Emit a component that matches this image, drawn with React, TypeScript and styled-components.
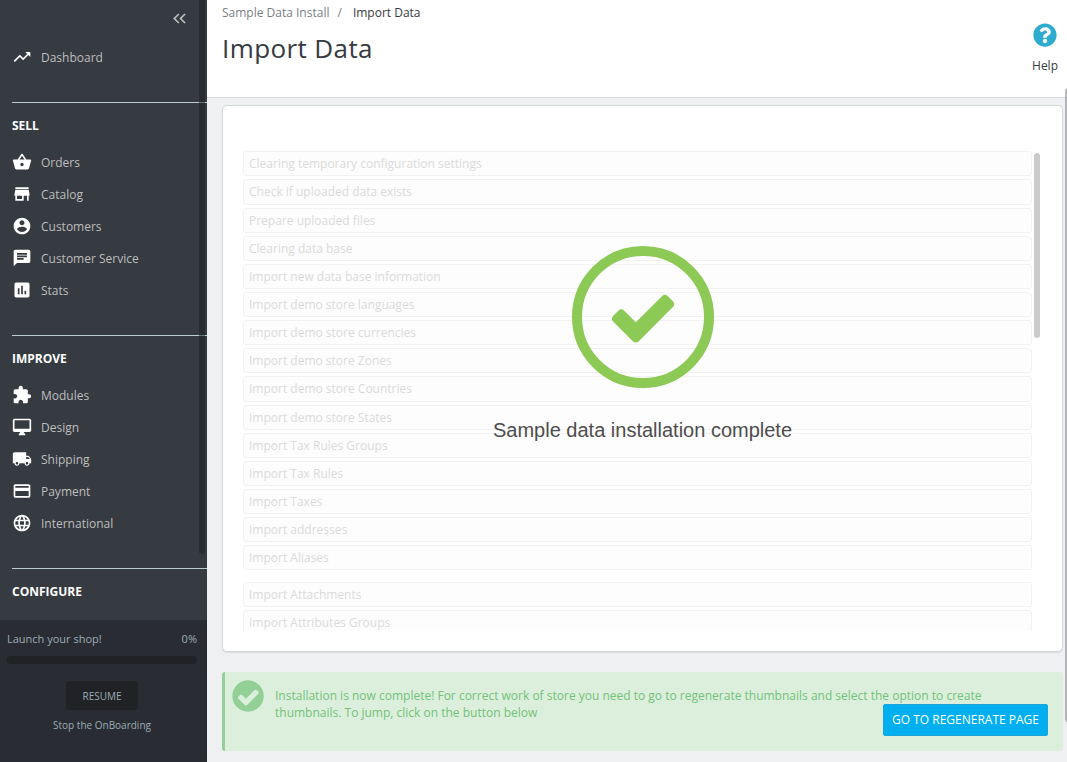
import React from "react";
import styled, { createGlobalStyle } from "styled-components";
import { MdTrendingUp, MdChat, MdAssessment, MdExtension, MdLocalShipping, MdCreditCard, MdLanguage } from "react-icons/md";
import { FaQuestionCircle } from "react-icons/fa";

const GlobalStyle = createGlobalStyle`
  * { box-sizing: border-box; }
  body { margin: 0; font-family: "Open Sans", "Noto Sans", sans-serif; font-size: 12px; background: #eef0f2; overflow: hidden; }
`;

const Page = styled.div`
  position: relative;
  display: flex;
  width: 1067px;
  height: 762px;
  overflow: hidden;
  background: #eef0f2;
`;

const Sidebar = styled.nav`
  position: relative;
  display: flex;
  flex-direction: column;
  flex: none;
  width: 207px;
  height: 762px;
  background: #363a41;
`;

const MenuArea = styled.div`
  height: 620px;
  flex: none;
`;

const Collapse = styled.div`
  display: flex;
  justify-content: flex-end;
  height: 41px;
  padding: 13px 20px 0 0;
`;

const Rail = styled.div`
  position: absolute;
  top: -4px;
  right: 2px;
  width: 6px;
  height: 558px;
  border-radius: 3px;
  background: rgba(30, 30, 38, 0.5);
`;

const Section = styled.section`
  margin-bottom: 29px;
`;

const SectionTitle = styled.h2`
  margin: 0 0 0 12px;
  height: 44px;
  border-top: 1px solid #bbcdd2;
  color: #fff;
  font-size: 12px;
  font-weight: 700;
  line-height: 45px;
`;

const MenuItem = styled.a`
  display: flex;
  align-items: center;
  height: 32px;
  padding-left: 11.6px;
  gap: 9.4px;
  color: #bebebe;
  font-size: 12px;
  svg {
    flex: none;
    width: 20px;
    height: 20px;
    color: #fff;
  }
`;

const Onboarding = styled.div`
  display: flex;
  flex-direction: column;
  flex: 1;
  align-items: center;
  padding: 10px 10px 0 7px;
  background: #2a2c33;
  color: #9badb3;
`;

const LaunchRow = styled.div`
  display: flex;
  align-self: stretch;
  justify-content: space-between;
  font-size: 11px;
  line-height: 18px;
`;

const Track = styled.div`
  align-self: stretch;
  height: 8px;
  margin-top: 8px;
  border-radius: 4px;
  background: #202226;
`;

const ResumeButton = styled.button`
  width: 72px;
  height: 29px;
  margin-top: 17px;
  padding: 0;
  border: 0;
  border-radius: 3px;
  background: #202226;
  color: #9badb3;
  font: 10px "Open Sans", sans-serif;
`;

const StopLink = styled.a`
  margin-top: 7px;
  font-size: 10px;
  line-height: 16px;
`;

const Main = styled.main`
  flex: 1;
  min-width: 0;
`;

const Header = styled.header`
  display: flex;
  justify-content: space-between;
  height: 98px;
  padding: 0 9px 0 15px;
  border-bottom: 1px solid #d8dbdd;
  background: #fff;
`;

const Breadcrumb = styled.div`
  display: flex;
  padding-top: 4px;
  color: #363a41;
  line-height: 18px;
`;

const Crumb = styled.span`
  color: #7c8085;
`;

const Slash = styled.span`
  margin: 0 11px 0 8px;
  color: #7c8085;
`;

const Title = styled.h1`
  margin: 8px 0 0;
  color: #363a41;
  font-size: 26px;
  font-weight: 400;
  letter-spacing: 0.4px;
  line-height: 36px;
`;

const Help = styled.div`
  display: flex;
  flex-direction: column;
  align-items: center;
  padding-top: 23px;
  color: #363a41;
  line-height: 16px;
  svg {
    margin-bottom: 11px;
    color: #2eacce;
  }
`;

const Panel = styled.section`
  position: relative;
  width: 841px;
  height: 547px;
  margin: 7px 0 0 15px;
  padding: 45px 21px 0 20px;
  border: 1px solid #d3d8db;
  border-radius: 5px;
  background: #fff;
  box-shadow: 0 1px 1px rgba(0, 0, 0, 0.08);
`;

const TaskList = styled.div`
  display: flex;
  height: 480px;
  overflow: hidden;
`;

const Tasks = styled.div`
  width: 789px;
  padding-top: 0.3px;
`;

const Task = styled.div<{ $gap?: boolean }>`
  height: 25.155px;
  margin-bottom: ${(p) => (p.$gap ? 11.6 : 3)}px;
  padding-left: 5px;
  border: 1px solid #f2f2f2;
  border-radius: 3px;
  background: #fdfdfd;
  color: #dadada;
  line-height: 23px;
`;

const ListThumb = styled.div`
  width: 6px;
  height: 185px;
  margin: 2px 0 0 2px;
  border-radius: 3px;
  background: #cbcbcb;
`;

const Complete = styled.div`
  position: absolute;
  top: 140px;
  left: 0;
  right: 0;
  display: flex;
  flex-direction: column;
  align-items: center;
  color: #4d4d4d;
  font: 20px/24px "Liberation Sans", Arial, sans-serif;
  svg {
    margin-bottom: 30px;
  }
`;

const Alert = styled.div`
  position: relative;
  display: flex;
  width: 841px;
  height: 79px;
  margin: 20px 0 0 15px;
  padding: 8px 0 0 6.5px;
  border-left: 3px solid #92d097;
  border-radius: 3px;
  background: #dcefdd;
  color: #72c279;
  svg {
    flex: none;
  }
`;

const AlertText = styled.p`
  width: 730px;
  margin: 7px 0 0 11.5px;
  line-height: 17px;
`;

const RegenerateButton = styled.button`
  position: absolute;
  right: 15px;
  bottom: 15px;
  width: 165px;
  height: 32px;
  padding: 0 0 2px;
  border: 1px solid #1ea6dc;
  border-radius: 2px;
  background: #00aff0;
  color: #fff;
  font: 12px "Open Sans", sans-serif;
  white-space: nowrap;
`;

const PageThumb = styled.div`
  position: absolute;
  top: 88px;
  right: -4px;
  width: 6px;
  height: 634px;
  border-radius: 3px;
  background: rgba(120, 120, 124, 0.5);
`;

const glyph = (d: string) => () => (
  <svg viewBox="0 0 24 24" fill="currentColor">
    <path d={d} />
  </svg>
);

const BasketIcon = glyph(
  "M17.21 9l-4.38-6.56a.993.993 0 0 0-.83-.42c-.32 0-.64.14-.83.43L6.79 9H2c-.55 0-1 .45-1 1 0 .09.01.18.04.27l2.54 9.27c.23.84 1 1.46 1.92 1.46h13c.92 0 1.69-.62 1.93-1.46l2.54-9.27L23 10c0-.55-.45-1-1-1h-4.79zM9 9l3-4.4L15 9H9zm3 8c-1.1 0-2-.9-2-2s.9-2 2-2 2 .9 2 2-.9 2-2 2z"
);
const StoreIcon = glyph("M20 4H4v2h16V4zm1 10v-2l-1-5H4l-1 5v2h1v6h10v-6h4v6h2v-6h1zm-9 4H6v-4h6v4z");
const PersonIcon = glyph(
  "M12 2C6.48 2 2 6.48 2 12s4.48 10 10 10 10-4.48 10-10S17.52 2 12 2zm0 3c1.66 0 3 1.34 3 3s-1.34 3-3 3-3-1.34-3-3 1.34-3 3-3zm0 14.2c-2.5 0-4.71-1.28-6-3.22.03-1.99 4-3.08 6-3.08 1.99 0 5.97 1.09 6 3.08-1.29 1.94-3.5 3.22-6 3.22z"
);
const DesktopIcon = glyph(
  "M21 2H3c-1.1 0-2 .9-2 2v12c0 1.1.9 2 2 2h7l-2 3v1h8v-1l-2-3h7c1.1 0 2-.9 2-2V4c0-1.1-.9-2-2-2zm0 12H3V4h18v10z"
);

const sell = [
  { label: "Orders", Icon: BasketIcon },
  { label: "Catalog", Icon: StoreIcon },
  { label: "Customers", Icon: PersonIcon },
  { label: "Customer Service", Icon: MdChat },
  { label: "Stats", Icon: MdAssessment },
];

const improve = [
  { label: "Modules", Icon: MdExtension },
  { label: "Design", Icon: DesktopIcon },
  { label: "Shipping", Icon: MdLocalShipping },
  { label: "Payment", Icon: MdCreditCard },
  { label: "International", Icon: MdLanguage },
];

const tasks = [
  "Clearing temporary configuration settings",
  "Check if uploaded data exists",
  "Prepare uploaded files",
  "Clearing data base",
  "Import new data base information",
  "Import demo store languages",
  "Import demo store currencies",
  "Import demo store Zones",
  "Import demo store Countries",
  "Import demo store States",
  "Import Tax Rules Groups",
  "Import Tax Rules",
  "Import Taxes",
  "Import addresses",
  "Import Aliases",
  "Import Attachments",
  "Import Attributes Groups",
];

const CHECK_PATH =
  "M1671 566q0 40-28 68l-724 724-136 136q-28 28-68 28t-68-28l-136-136-362-362q-28-28-28-68t28-68l136-136q28-28 68-28t68 28l294 295 656-657q28-28 68-28t68 28l136 136q28 28 28 68z";

export default function App() {
  return (
    <Page>
      <GlobalStyle />
      <Sidebar>
        <MenuArea>
          <Collapse>
            <svg width="14" height="11" viewBox="0 0 14 11" fill="none" stroke="#bebebe" strokeWidth="1.7">
              <path d="M5.9 1 1.3 5.5 5.9 10M12.1 1 7.5 5.5l4.6 4.5" />
            </svg>
          </Collapse>
          <Section>
            <MenuItem>
              <MdTrendingUp />
              Dashboard
            </MenuItem>
          </Section>
          <Section>
            <SectionTitle>SELL</SectionTitle>
            {sell.map(({ label, Icon }) => (
              <MenuItem key={label}>
                <Icon />
                {label}
              </MenuItem>
            ))}
          </Section>
          <Section>
            <SectionTitle>IMPROVE</SectionTitle>
            {improve.map(({ label, Icon }) => (
              <MenuItem key={label}>
                <Icon />
                {label}
              </MenuItem>
            ))}
          </Section>
          <SectionTitle>CONFIGURE</SectionTitle>
        </MenuArea>
        <Rail />
        <Onboarding>
          <LaunchRow>
            <span>Launch your shop!</span>
            <span>0%</span>
          </LaunchRow>
          <Track />
          <ResumeButton>RESUME</ResumeButton>
          <StopLink>Stop the OnBoarding</StopLink>
        </Onboarding>
      </Sidebar>
      <Main>
        <Header>
          <div>
            <Breadcrumb>
              <Crumb>Sample Data Install</Crumb>
              <Slash>/</Slash>
              <span>Import Data</span>
            </Breadcrumb>
            <Title>Import Data</Title>
          </div>
          <Help>
            <FaQuestionCircle size={24} />
            Help
          </Help>
        </Header>
        <Panel>
          <TaskList>
            <Tasks>
              {tasks.map((task) => (
                <Task key={task} $gap={task === "Import Aliases"}>
                  {task}
                </Task>
              ))}
            </Tasks>
            <ListThumb />
          </TaskList>
          <Complete>
            <svg width="142" height="142" viewBox="0 0 142 142">
              <circle cx="71" cy="71" r="66" fill="none" stroke="#8cc955" strokeWidth="10" />
              <g transform="translate(35.1 35.4) scale(0.04018)">
                <path d={CHECK_PATH} fill="#8cc955" />
              </g>
            </svg>
            Sample data installation complete
          </Complete>
        </Panel>
        <Alert>
          <svg width="32" height="32" viewBox="0 0 32 32">
            <circle cx="16" cy="16" r="15.7" fill="#92d097" />
            <g transform="translate(4.3 5.2) scale(0.0134)">
              <path d={CHECK_PATH} fill="#dcefdd" />
            </g>
          </svg>
          <AlertText>
            Installation is now complete! For correct work of store you need to go to regenerate thumbnails and select
            the option to create thumbnails. To jump, click on the button below
          </AlertText>
          <RegenerateButton>GO TO REGENERATE PAGE</RegenerateButton>
        </Alert>
      </Main>
      <PageThumb />
    </Page>
  );
}
